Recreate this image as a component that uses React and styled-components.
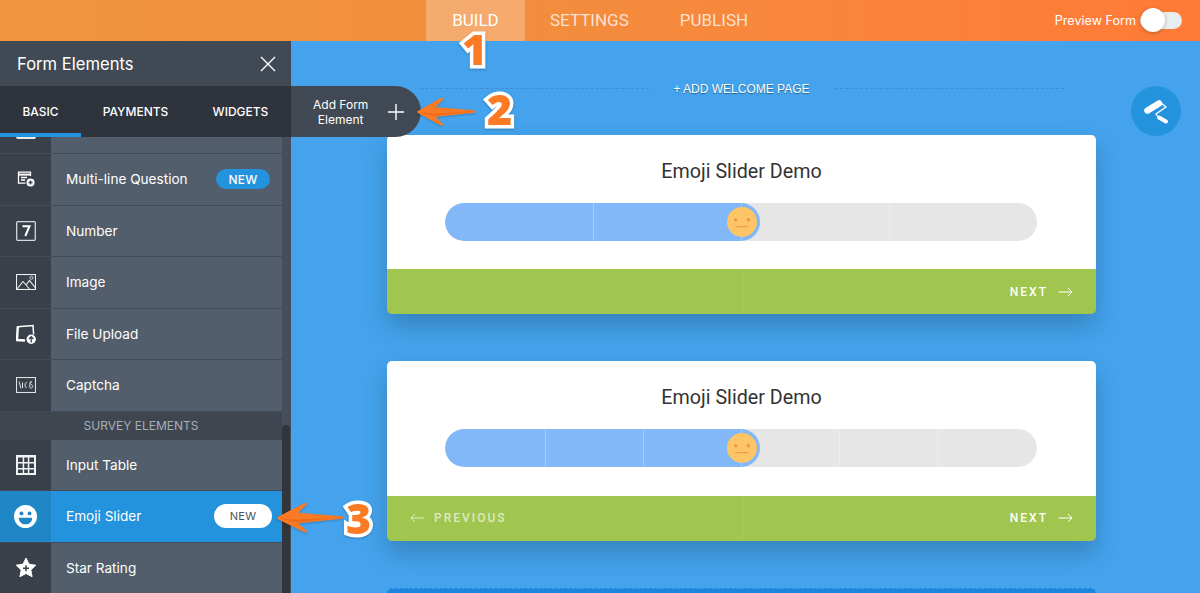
import React from "react";
import styled, { createGlobalStyle } from "styled-components";

const Global = createGlobalStyle`
  html, body {
    margin: 0;
    padding: 0;
    background: #44a3ec;
    font-family: Inter, Roboto, "Liberation Sans", sans-serif;
  }
`;

const sideItems = [
  { label: "Multi-line Question", icon: "multi", badge: true },
  { label: "Number", icon: "number" },
  { label: "Image", icon: "image" },
  { label: "File Upload", icon: "upload" },
  { label: "Captcha", icon: "captcha" },
  { section: "SURVEY ELEMENTS" },
  { label: "Input Table", icon: "table" },
  { label: "Emoji Slider", icon: "emoji", badge: true, active: true },
  { label: "Star Rating", icon: "star" },
];

function RowIcon({ name }) {
  if (name === "multi")
    return (
      <svg width="18" height="18" viewBox="0 0 18 18" fill="none" stroke="#fff" strokeWidth="1.3">
        <path d="M13.5 6V2.2H1.5v11h7" />
        <path d="M1.5 4.6h12" strokeWidth="2" />
        <path d="M4 7.5h6M4 10h4" />
        <circle cx="13.5" cy="12.5" r="4" fill="#fff" stroke="none" />
        <path d="M13.5 10.5v4M11.5 12.5h4" stroke="#394049" />
      </svg>
    );
  if (name === "number")
    return (
      <svg width="20" height="20" viewBox="0 0 20 20" fill="none">
        <rect x="0.7" y="0.7" width="18.6" height="18.6" rx="1" stroke="#d5d8dc" strokeWidth="1.3" />
        <path d="M6.500 5.200h7L9.300 15" stroke="#fff" strokeWidth="2" />
      </svg>
    );
  if (name === "image")
    return (
      <svg width="20" height="16" viewBox="0 0 20 16" fill="none" stroke="#f0f1f3" strokeWidth="1.100">
        <rect x="0.5" y="0.5" width="19" height="15" />
        <path d="M1 15l6-7.500 6.500 7.500M10 11l3.500-4.500L19.500 14" />
        <circle cx="15.500" cy="3.800" r="1.500" strokeWidth="0.8" />
      </svg>
    );
  if (name === "upload")
    return (
      <svg width="20" height="20" viewBox="0 0 20 20" fill="none">
        <path d="M1.800 2.800L17 1.500l.6 9" stroke="#fff" strokeWidth="1.500" />
        <path d="M1.800 2.200L1 16l8 .5" stroke="#fff" strokeWidth="2.400" />
        <circle cx="15.200" cy="15.300" r="4.700" fill="#fff" />
        <path d="M15.200 18.500v-6M13 15l2.200-2.400 2.200 2.400" stroke="#394049" strokeWidth="1.300" />
      </svg>
    );
  if (name === "captcha")
    return (
      <svg width="20" height="16" viewBox="0 0 20 16" fill="none" stroke="#e0e2e5">
        <rect x="0.5" y="0.5" width="19" height="15" strokeWidth="1.100" />
        <path d="M3 4.500l2 7M6.500 5.500v5.500M11 5.500c-2.500-.5-3 5.500 0 5M15.500 4.500c-2.500 0-1.500 3 .3 3.500s.7 3.500-1.300 3-.3-6 1.500-6.500" strokeWidth="1" />
      </svg>
    );
  if (name === "table")
    return (
      <svg width="20" height="20" viewBox="0 0 20 20" fill="#f2f3f4">
        <path
          d="M0 0h20v20H0zM2 2.500v4.500h4.700V2.500zm6.200 0v4.500h3.600V2.500zm5.100 0v4.500H18V2.500zM2 8.500v4.500h4.700V8.500zm6.200 0v4.500h3.600V8.500zm5.100 0v4.500H18V8.500zM2 14.500v3.500h4.700v-3.500zm6.200 0v3.500h3.600v-3.500zm5.100 0v3.500H18v-3.500z"
          fillRule="evenodd"
        />
      </svg>
    );
  if (name === "emoji")
    return (
      <svg width="23" height="23" viewBox="0 0 24 24">
        <circle cx="12" cy="12" r="12" fill="#fff" />
        <circle cx="7.800" cy="8.800" r="2" fill="#2087c6" />
        <circle cx="16.200" cy="8.800" r="2" fill="#2087c6" />
        <path d="M5 13.200h14c0 4.200-3.200 7-7 7s-7-2.800-7-7z" fill="#2087c6" />
      </svg>
    );
  return (
    <svg width="20" height="19" viewBox="0 0 20 19">
      <path
        d="M10 0l3 6.200 6.800 1-5 4.700 1.300 6.800L10 15.500l-6.100 3.200 1.300-6.800-5-4.700 6.800-1z"
        fill="#fff"
        stroke="#fff"
        strokeLinejoin="round"
      />
      <path d="M10 7.300v6M7 10.300h6" stroke="#394049" strokeWidth="1.500" />
    </svg>
  );
}

function Slider({ stops }) {
  return (
    <Track>
      {stops.map((w, i) => (
        <Step key={i} $w={w} $first={i === 0} />
      ))}
      <Fill />
      <Thumb>
        <svg width="30" height="30" viewBox="0 0 30 30">
          <circle cx="15" cy="15" r="15" fill="#fdc565" />
          <circle cx="8.700" cy="12.700" r="1.800" fill="#f0964a" />
          <circle cx="21.300" cy="12.700" r="1.800" fill="#f0964a" />
          <path d="M8.500 19.700h13" stroke="#f0964a" strokeWidth="1" />
        </svg>
      </Thumb>
    </Track>
  );
}

function FormCard({ stops, previous }) {
  return (
    <Card>
      <CardBody $tall={previous}>
        <CardTitle>Emoji Slider Demo</CardTitle>
        <Slider stops={stops} />
      </CardBody>
      <CardFooter $raised={previous}>
        <FooterSide>
          {previous && (
            <FooterButton $dim>
              <svg width="16" height="10" viewBox="0 0 16 10" fill="none" stroke="currentColor">
                <path d="M14.500 5H1M5 1L1 5l4 4" />
              </svg>
              PREVIOUS
            </FooterButton>
          )}
        </FooterSide>
        <FooterSide $right>
          <FooterButton>
            NEXT
            <svg width="16" height="10" viewBox="0 0 16 10" fill="none" stroke="currentColor">
              <path d="M1.500 5H15M11 1l4 4-4 4" />
            </svg>
          </FooterButton>
        </FooterSide>
      </CardFooter>
    </Card>
  );
}

// orange hand-drawn arrow pointing left
function Callout({ width, height, x, y }) {
  return (
    <ArrowMark $x={x} $y={y} width={width} height={height} viewBox="0 0 65 30" preserveAspectRatio="none">
      <path
        d="M1.500 15.500L28 2 18 11.500 64 15 18 19.500 28 28.500z"
        fill="#fb7a24"
        stroke="#fb7a24"
        strokeWidth="2.500"
        strokeLinejoin="round"
      />
      <path d="M1.500 15.500L18 19.500 64 15 18 17z" fill="#ee6a1a" />
    </ArrowMark>
  );
}

export default function App() {
  return (
    <>
      <Global />
      <Page>
        <TopBar>
          <Nav>
            <NavItem $active>BUILD</NavItem>
            <NavItem>SETTINGS</NavItem>
            <NavItem>PUBLISH</NavItem>
          </Nav>
          <Preview>
            <span>Preview Form</span>
            <Toggle>
              <Knob />
            </Toggle>
          </Preview>
        </TopBar>

        <Body>
          <Sidebar>
            <SideHead>
              Form Elements
              <svg width="16" height="16" viewBox="0 0 16 16" stroke="#fff" strokeWidth="1.400">
                <path d="M1 1l14 14M15 1L1 15" />
              </svg>
            </SideHead>
            <Tabs>
              <Tab $w={81} $active>BASIC</Tab>
              <Tab $w={109}>PAYMENTS</Tab>
              <Tab $w={101}>WIDGETS</Tab>
            </Tabs>
            <SideScroll>
              <List>
                <Peek>
                  <PeekCell>
                    <PeekIcon />
                  </PeekCell>
                </Peek>
                {sideItems.map((item) =>
                  item.section ? (
                    <Section key={item.section}>{item.section}</Section>
                  ) : (
                    <Row key={item.label} $active={item.active}>
                      <IconCell $active={item.active}>
                        <RowIcon name={item.icon} />
                      </IconCell>
                      <RowLabel>{item.label}</RowLabel>
                      {item.badge && <Badge $active={item.active}>NEW</Badge>}
                    </Row>
                  )
                )}
              </List>
              <ScrollTrack>
                <ScrollThumb />
              </ScrollTrack>
            </SideScroll>
          </Sidebar>

          <Main>
            <Welcome>
              <Dash />
              <WelcomeText>+ ADD WELCOME PAGE</WelcomeText>
              <Dash />
            </Welcome>
            <FormCard stops={[148, 148, 148, 148]} />
            <FormCard stops={[100, 98, 98, 98, 98, 100]} previous />
            <GhostCard />
          </Main>
        </Body>

        <AddElement>
          <span>
            Add Form
            <br />
            Element
          </span>
          <svg width="16" height="16" viewBox="0 0 16 16" stroke="#fff" strokeWidth="1.400">
            <path d="M8 0v16M0 8h16" />
          </svg>
        </AddElement>

        <PaintButton>
          <svg width="42" height="42" viewBox="0 0 42 42" fill="none" stroke="#fff">
            <path d="M12.500 20.500L24 13.500" strokeWidth="6.500" strokeLinecap="round" />
            <path d="M26 13l5 4-10 7 2 3" strokeWidth="1.300" />
            <path d="M24 27.500l7 4" strokeWidth="4" strokeLinecap="round" />
          </svg>
        </PaintButton>

        <Callout width={58} height={29} x={417} y={97} />
        <Callout width={66} height={31} x={277} y={502} />
        <StepNumber $x={462} $y={20}>1</StepNumber>
        <StepNumber $x={487} $y={80}>2</StepNumber>
        <StepNumber $x={346} $y={489}>3</StepNumber>
      </Page>
    </>
  );
}

const Page = styled.div`
  position: relative;
  width: 1200px;
  height: 593px;
  overflow: hidden;
  display: flex;
  flex-direction: column;
  background: #44a3ec;
`;

const TopBar = styled.header`
  height: 41px;
  flex: none;
  display: flex;
  align-items: center;
  padding-left: 426px;
  padding-right: 18px;
  background: linear-gradient(90deg, #ef953f 0%, #f38d3d 45%, #ff7a37 100%);
`;

const Nav = styled.nav`
  display: flex;
  height: 100%;
`;

const NavItem = styled.div`
  display: flex;
  align-items: center;
  justify-content: center;
  box-sizing: border-box;
  height: 100%;
  padding-bottom: 1px;
  font-family: Roboto, sans-serif;
  font-size: 17px;
  color: ${(p) => (p.$active ? "#fff" : "rgba(255,255,255,.75)")};
  background: ${(p) => (p.$active ? "rgba(255,255,255,.25)" : "transparent")};
  width: ${(p) => (p.$active ? "99px" : "auto")};
  margin-right: ${(p) => (p.$active ? "25px" : "51px")};
`;

const Preview = styled.div`
  margin-left: auto;
  display: flex;
  align-items: center;
  gap: 4px;
  font-size: 12.600px;
  color: #fff;
`;

const Toggle = styled.div`
  position: relative;
  width: 42px;
  height: 17px;
  border-radius: 9px;
  background: #e8eded;
`;

const Knob = styled.div`
  position: absolute;
  left: 1px;
  top: -4px;
  width: 24px;
  height: 24px;
  border-radius: 50%;
  background: #fff;
  box-shadow: 0 1px 4px rgba(0, 0, 0, 0.25);
`;

const Body = styled.div`
  flex: 1;
  display: flex;
  min-height: 0;
`;

const Sidebar = styled.aside`
  width: 291px;
  flex: none;
  display: flex;
  flex-direction: column;
  background: #454e5a;
`;

const SideHead = styled.div`
  height: 45px;
  flex: none;
  display: flex;
  align-items: center;
  justify-content: space-between;
  padding: 0 15px 0 17px;
  background: #414a54;
  color: #fff;
  font-size: 16.600px;
`;

const Tabs = styled.div`
  height: 51px;
  flex: none;
  display: flex;
  background: #2f333b;
`;

const Tab = styled.div`
  width: ${(p) => p.$w}px;
  display: flex;
  align-items: center;
  justify-content: center;
  box-sizing: border-box;
  padding-top: 4px;
  font-size: 12px;
  font-weight: 500;
  color: #fff;
  border-bottom: 4px solid ${(p) => (p.$active ? "#2493dd" : "transparent")};
`;

const SideScroll = styled.div`
  flex: 1;
  display: flex;
  min-height: 0;
`;

const List = styled.div`
  width: 282px;
  flex: none;
  overflow: hidden;
  background: #535e6c;
`;

const Peek = styled.div`
  height: 16px;
  border-bottom: 1px solid #424b57;
`;

const PeekCell = styled.div`
  width: 51px;
  height: 100%;
  background: #394049;
  display: flex;
  justify-content: center;
`;

const PeekIcon = styled.div`
  width: 20px;
  height: 2px;
  background: #e8eaec;
  border-radius: 0 0 2px 2px;
`;

const Row = styled.div`
  height: 50.500px;
  display: flex;
  align-items: center;
  border-bottom: 1px solid #424b57;
  background: ${(p) => (p.$active ? "#2493dd" : "#535e6c")};
`;

const IconCell = styled.div`
  width: 51px;
  height: 100%;
  flex: none;
  display: flex;
  align-items: center;
  justify-content: center;
  background: ${(p) => (p.$active ? "#2087c6" : "#394049")};
`;

const RowLabel = styled.span`
  margin-left: 15px;
  font-size: 13.600px;
  color: #fff;
`;

const Badge = styled.span`
  margin-left: auto;
  display: flex;
  align-items: center;
  justify-content: center;
  box-sizing: border-box;
  border-radius: 12px;
  font-size: ${(p) => (p.$active ? "11px" : "12px")};
  font-weight: ${(p) => (p.$active ? 400 : 500)};
  letter-spacing: 0.2px;
  width: ${(p) => (p.$active ? "58px" : "54px")};
  height: ${(p) => (p.$active ? "24px" : "20px")};
  margin-right: ${(p) => (p.$active ? "10px" : "12px")};
  background: ${(p) => (p.$active ? "#fff" : "#2493dd")};
  color: ${(p) => (p.$active ? "#4a5460" : "#fff")};
`;

const Section = styled.div`
  height: 28px;
  display: flex;
  align-items: center;
  justify-content: center;
  background: #3f4650;
  color: #a9aeb5;
  font-size: 12px;
`;

const ScrollTrack = styled.div`
  width: 9px;
  flex: none;
  display: flex;
  flex-direction: column;
  padding-top: 288px;
  box-sizing: border-box;
  background: #454e5a;
`;

const ScrollThumb = styled.div`
  flex: 1;
  width: 8px;
  border-radius: 4px 4px 0 0;
  background: #31353c;
`;

const Main = styled.main`
  flex: 1;
  padding-left: 96px;
  display: flex;
  flex-direction: column;
  align-items: flex-start;
`;

const Welcome = styled.div`
  width: 709px;
  height: 94px;
  flex: none;
  display: flex;
  align-items: flex-start;
  justify-content: center;
  padding-top: 41px;
  box-sizing: border-box;
`;

const Dash = styled.div`
  width: 229px;
  margin-top: 6px;
  border-top: 1px dashed #3d8dd0;
`;

const WelcomeText = styled.span`
  width: 186px;
  text-align: center;
  font-family: "Liberation Sans", sans-serif;
  font-size: 12px;
  line-height: 15px;
  color: #fff;
  text-shadow: 0 1px 1px rgba(0, 0, 0, 0.4);
`;

const Card = styled.section`
  width: 709px;
  flex: none;
  margin-bottom: 47px;
  border-radius: 5px;
  overflow: hidden;
  box-shadow: 0 12px 24px rgba(0, 0, 0, 0.2);
`;

const CardBody = styled.div`
  height: ${(p) => (p.$tall ? "135px" : "134px")};
  background: #fff;
  display: flex;
  flex-direction: column;
  align-items: center;
  padding-top: 25px;
  box-sizing: border-box;
`;

const CardTitle = styled.h2`
  margin: 0 0 19px;
  font-family: Roboto, sans-serif;
  font-size: 19.700px;
  line-height: 24px;
  font-weight: 400;
  color: #333;
`;

const Track = styled.div`
  position: relative;
  width: 592px;
  height: 38px;
  margin-right: 2px;
  display: flex;
  border-radius: 19px;
  overflow: hidden;
  background: #e6e6e6;
`;

const Step = styled.div`
  flex: none;
  box-sizing: border-box;
  width: ${(p) => p.$w}px;
  position: relative;
  z-index: 1;
  border-left: ${(p) => (p.$first ? "none" : "1px solid rgba(255,255,255,.3)")};
`;

const Fill = styled.div`
  position: absolute;
  left: 0;
  top: 0;
  width: 315px;
  height: 38px;
  border-radius: 19px;
  background: #82b7f8;
`;

const Thumb = styled.div`
  position: absolute;
  left: 282px;
  top: 4px;
  z-index: 2;
  width: 30px;
  height: 30px;
  line-height: 0;
`;

const CardFooter = styled.div`
  height: 45px;
  box-sizing: border-box;
  padding-bottom: ${(p) => (p.$raised ? "2px" : "0")};
  display: flex;
  background: #a0c650;
`;

const FooterSide = styled.div`
  flex: ${(p) => (p.$right ? "1" : "0 0 355px")};
  box-sizing: border-box;
  display: flex;
  align-items: center;
  justify-content: ${(p) => (p.$right ? "flex-end" : "flex-start")};
  padding: ${(p) => (p.$right ? "0 23px 0 0" : "0 0 0 23px")};
  border-left: ${(p) => (p.$right ? "1px solid rgba(255,255,255,.12)" : "none")};
`;

const FooterButton = styled.div`
  display: flex;
  align-items: center;
  gap: ${(p) => (p.$dim ? "8px" : "9px")};
  font-family: Roboto, sans-serif;
  font-size: 12px;
  font-weight: 500;
  letter-spacing: 2px;
  color: ${(p) => (p.$dim ? "rgba(255,255,255,.65)" : "#fff")};
`;

const GhostCard = styled.div`
  width: 709px;
  height: 60px;
  flex: none;
  border-radius: 5px;
  box-sizing: border-box;
  background: #1e85dd;
  border: 1px dashed #3c97e4;
`;

const AddElement = styled.div`
  position: absolute;
  left: 291px;
  top: 86px;
  width: 130px;
  height: 51px;
  box-sizing: border-box;
  display: flex;
  align-items: center;
  justify-content: space-between;
  padding: 0 17px 0 22px;
  border-radius: 0 25.500px 25.500px 0;
  background: #414a54;
  color: #fff;
  font-size: 12px;
  line-height: 15px;
  text-align: center;
`;

const PaintButton = styled.div`
  position: absolute;
  left: 1131px;
  top: 86px;
  width: 50px;
  height: 50px;
  border-radius: 50%;
  background: #2493dd;
  display: flex;
  align-items: center;
  justify-content: center;
`;

const ArrowMark = styled.svg`
  position: absolute;
  left: ${(p) => p.$x}px;
  top: ${(p) => p.$y}px;
  filter: drop-shadow(0 1px 1px rgba(0, 0, 0, 0.2));
`;

const StepNumber = styled.div`
  position: absolute;
  left: ${(p) => p.$x}px;
  top: ${(p) => p.$y}px;
  font-family: "Open Sans", sans-serif;
  font-weight: 800;
  font-size: 43px;
  line-height: 58px;
  color: #fb7a24;
  -webkit-text-stroke: 7px #fff;
  paint-order: stroke fill;
  filter: drop-shadow(0 1px 1px rgba(0, 0, 0, 0.25));
`;
